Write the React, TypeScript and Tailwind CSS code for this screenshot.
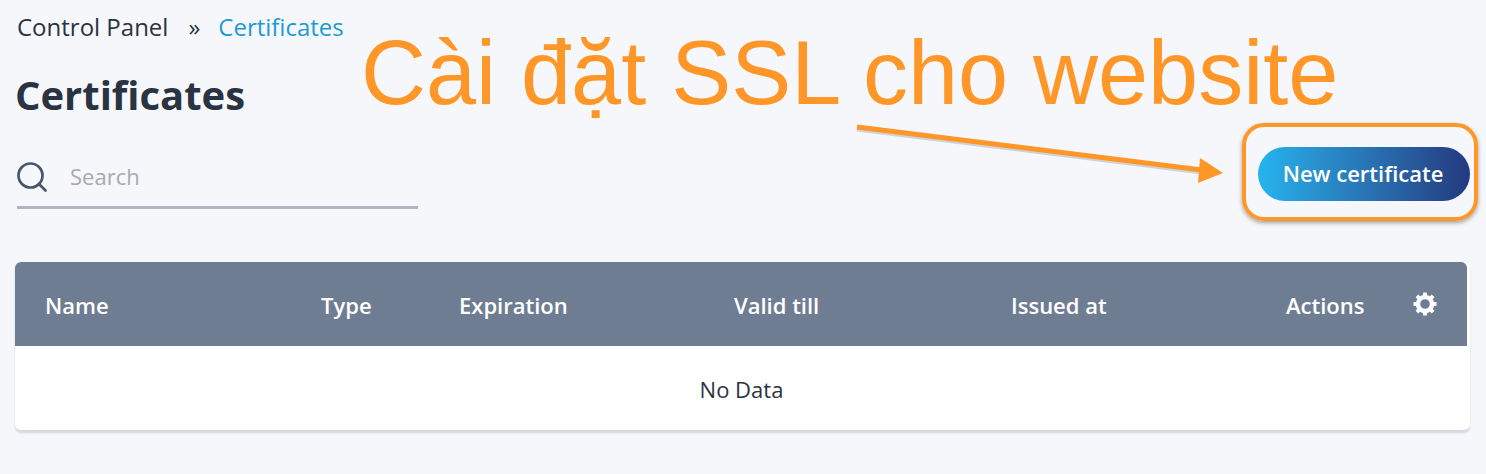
import { Search } from 'lucide-react';

const columns = [
  { label: 'Name', width: 'w-[276px]' },
  { label: 'Type', width: 'w-[138px]' },
  { label: 'Expiration', width: 'w-[275px]' },
  { label: 'Valid till', width: 'w-[277px]' },
  { label: 'Issued at', width: 'w-[275px]' },
  { label: 'Actions', width: 'w-[127px]' },
];

const Gear = () => (
  <svg viewBox="0 0 24 24" className="w-[24px] h-[24px] text-white -mt-[3px]" fill="none">
    <circle cx="12" cy="12" r="7" stroke="currentColor" strokeWidth="4.4" />
    <g stroke="currentColor" strokeWidth="3.8">
      <path d="M12 0.5V4M12 20V23.5M0.5 12H4M20 12H23.5" />
      <path d="M3.9 3.9L6.3 6.3M17.7 17.7L20.1 20.1M3.9 20.1L6.3 17.7M17.7 6.3L20.1 3.9" />
    </g>
  </svg>
);

export default function App() {
  return (
    <div className="relative w-[1486px] h-[474px] overflow-hidden bg-[#f5f7fb] font-['Open_Sans','Noto_Sans',sans-serif] text-[#2a3342]">
      <div className="pl-[15px] pt-[11px]">
        <nav className="flex items-center h-[32px] pl-[2px] text-[24px] leading-[32px]">
          <span>Control Panel</span>
          <span className="ml-[20px]">»</span>
          <span className="ml-[18px] text-[#1d9ad6]">Certificates</span>
        </nav>

        <h1 className="mt-[28px] text-[40px] leading-[48px] font-bold">Certificates</h1>

        <div className="mt-[35px] ml-[2px] flex items-center w-[401px] h-[55px] border-b-[3px] border-[#b0b6c1]">
          <Search size={36} strokeWidth={1.8} className="text-[#47566a] -ml-[3px] mb-[6px]" />
          <span className="ml-[20px] mb-[8px] text-[22px] text-[#a7a9ac]">Search</span>
        </div>

        <div className="mt-[53px] w-[1455px] h-[168px] bg-white rounded-[6px] shadow-[0_3px_2px_rgba(180,186,198,0.5)]">
          <div className="flex items-center w-[1452px] h-[84px] pl-[30px] pt-[3px] bg-[#6f7d92] rounded-t-[6px] text-white text-[22px] font-semibold">
            {columns.map((col) => (
              <div key={col.label} className={col.width}>{col.label}</div>
            ))}
            <Gear />
          </div>
          <div className="flex items-center justify-center h-[84px] pt-[3px] text-[22px] pr-[2px]">No Data</div>
        </div>
      </div>

      {/* annotation drawn over the page */}
      <div className="absolute left-[361px] top-[23px] font-['Liberation_Sans',sans-serif] text-[#ff9628] text-[90px] leading-[100px] whitespace-nowrap">
        Cài đặt SSL cho website
      </div>
      <svg className="absolute left-[850px] top-[118px]" width="390" height="70" viewBox="0 0 390 70" fill="none">
        <path d="M7 9 L352 52" stroke="#8a8f99" strokeOpacity="0.35" strokeWidth="5" transform="translate(0 2)" />
        <path d="M7 9 L352 52" stroke="#ff9628" strokeWidth="5" />
        <path d="M350 40 L373 55 L348 65 Z" fill="#ff9628" />
      </svg>
      <div className="absolute left-[1242px] top-[123px] w-[236px] h-[98px] rounded-[22px] border-[4px] border-[#ff9628] shadow-[0_2px_4px_rgba(90,90,90,0.55)]" />
      <button className="absolute left-[1258px] top-[147px] w-[212px] h-[54px] pb-[2px] pr-[2px] rounded-full bg-gradient-to-r from-[#25b4ee] to-[#233a7f] text-white text-[22px] font-semibold">
        New certificate
      </button>
    </div>
  );
}
